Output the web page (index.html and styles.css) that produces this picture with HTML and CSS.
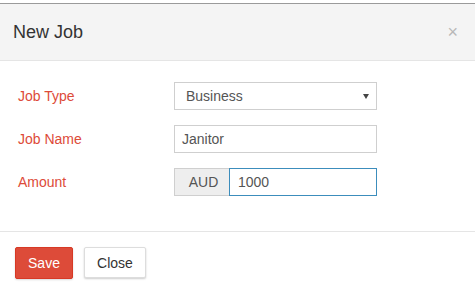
FILE: index.html
```html
<!DOCTYPE html>
<html>
<head>
<meta charset="utf-8">
<link rel="stylesheet" href="styles.css">
</head>
<body>
<div class="modal">
  <div class="modal-header">
    <h4 class="modal-title">New Job</h4>
    <span class="close">&times;</span>
  </div>
  <div class="modal-body">
    <div class="row">
      <label class="lbl">Job Type</label>
      <div class="select">
        <span>Business</span>
        <svg class="caret" width="6" height="5" viewBox="0 0 6 5"><path d="M0 0H6L3 5Z" fill="#444"/></svg>
      </div>
    </div>
    <div class="row">
      <label class="lbl">Job Name</label>
      <div class="input">Janitor</div>
    </div>
    <div class="row">
      <label class="lbl">Amount</label>
      <div class="group">
        <span class="addon">AUD</span>
        <div class="input focus">1000</div>
      </div>
    </div>
  </div>
  <div class="modal-footer">
    <button class="btn btn-danger">Save</button>
    <button class="btn btn-default">Close</button>
  </div>
</div>
</body>
</html>
```

FILE: styles.css
```css
html, body { margin: 0; padding: 0; background: #fff; }
body { font-family: "Liberation Sans", Arial, sans-serif; font-size: 14px; color: #333; }
.modal { width: 475px; margin-top: 3px; border-top: 1px solid #9a9a9a; }
.modal-header {
  height: 56px; background: #f4f4f4; border-bottom: 1px solid #e5e5e5;
  display: flex; align-items: center; justify-content: space-between;
  padding: 0 17px 0 13px;
}
.modal-title { margin: 0; font-size: 18px; font-weight: normal; color: #333; line-height: 20px; padding-bottom: 1px; }
.close { font-size: 18px; color: #b8b8b8; line-height: 20px; font-weight: normal; }
.modal-body { padding: 21px 18px 35px 18px; display: flex; flex-direction: column; gap: 15px; }
.row { display: flex; align-items: center; height: 28px; }
.lbl { width: 156px; color: #dd4b39; font-size: 14px; }
.select, .input {
  box-sizing: border-box; width: 203px; height: 28px; border: 1px solid #cfcfcf;
  display: flex; align-items: center; color: #555; font-size: 14px; background: #fff;
}
.select { padding: 0 7px 0 11px; justify-content: space-between; }
.input { padding: 0 7px; }
.group { display: flex; width: 203px; }
.addon {
  box-sizing: border-box; width: 55px; height: 28px; background: #eee; border: 1px solid #cfcfcf;
  border-right: none; display: flex; align-items: center; justify-content: center; color: #555; padding-left: 3px;
}
.group .input { width: 148px; }
.input.focus { border-color: #3c8dbc; padding-left: 8px; }
.modal-footer { border-top: 1px solid #e5e5e5; padding: 15px 15px; display: flex; gap: 11px; align-items: flex-start; }
.btn { font-family: inherit; font-size: 14px; border-radius: 2px; padding: 0; cursor: pointer; }
.btn-danger { width: 58px; height: 32px; background: #dd4b39; border: 1px solid #d73925; color: #fff; box-shadow: 0 1px 2px rgba(0,0,0,0.15); }
.btn-default { width: 62px; height: 31px; background: #fff; border: 1px solid #ddd; color: #333; box-shadow: 0 1px 2px rgba(0,0,0,0.2); }
```
